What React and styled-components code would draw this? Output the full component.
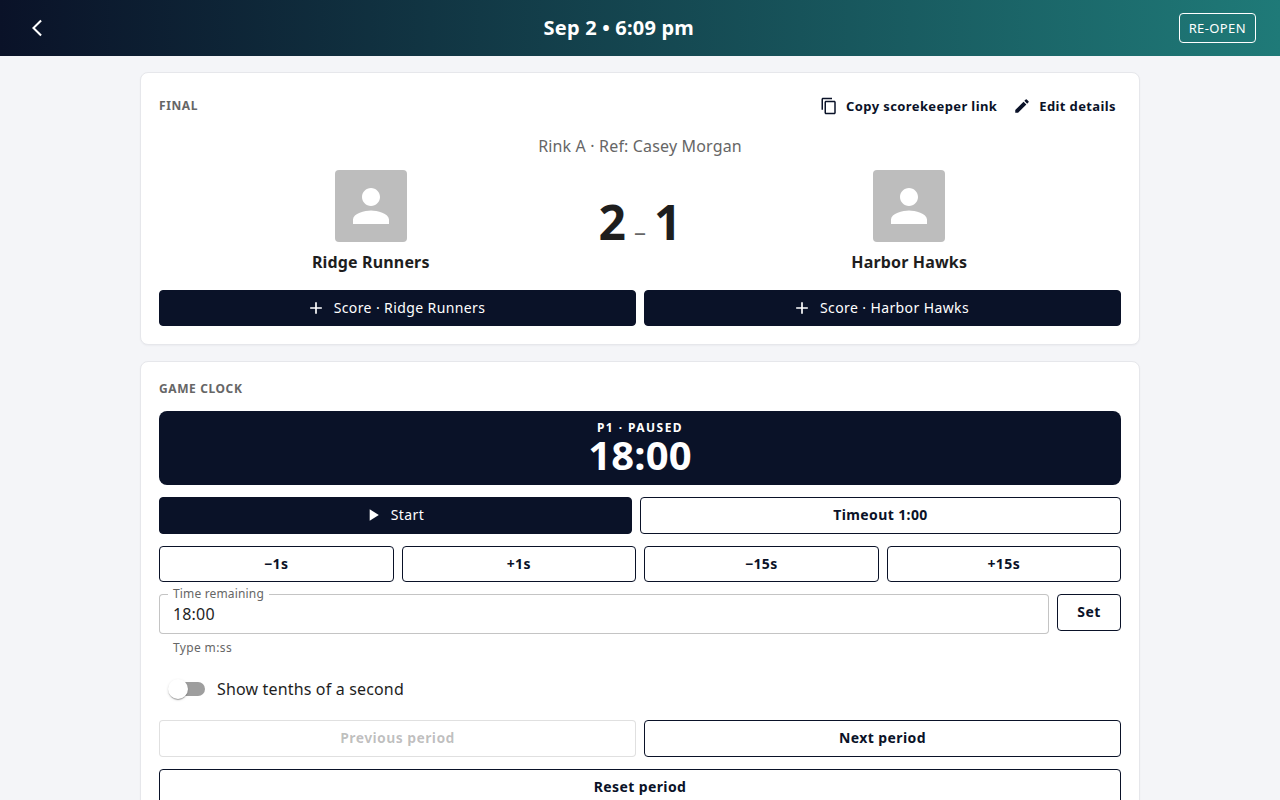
import React, { useState } from 'react';
import styled, { createGlobalStyle, css } from 'styled-components';

const color = {
  navy: '#0a1228',
  teal: '#1f7a78',
  page: '#f4f5f8',
  text: '#1e1e1e',
  muted: '#666666',
  cardBorder: '#e6e7eb',
  fieldBorder: 'rgba(0, 0, 0, 0.23)',
  disabledText: 'rgba(0, 0, 0, 0.26)',
  disabledBorder: 'rgba(0, 0, 0, 0.12)',
};

const GlobalStyle = createGlobalStyle`
  *, *::before, *::after { box-sizing: border-box; }
  body {
    margin: 0;
    background: ${color.page};
    color: ${color.text};
    font-family: 'Noto Sans', sans-serif;
    font-size: 16px;
    line-height: 24px;
    letter-spacing: 0.01em;
  }
  button, input { font: inherit; letter-spacing: inherit; }
`;

const AppBar = styled.header`
  display: flex;
  align-items: center;
  height: 56px;
  padding: 0 24px 0 15px;
  color: #fff;
  background: linear-gradient(90deg, ${color.navy}, ${color.teal});
`;

const BackButton = styled.button`
  display: flex;
  align-items: center;
  justify-content: center;
  width: 44px;
  height: 44px;
  padding: 0;
  border: 0;
  border-radius: 50%;
  background: none;
  color: inherit;
  cursor: pointer;
`;

const Title = styled.h1`
  flex: 1;
  margin: 0;
  font-size: 20px;
  line-height: 32px;
  font-weight: 700;
  letter-spacing: 0.01em;
  text-align: center;
`;

const ReopenButton = styled.button`
  height: 30px;
  padding: 0 9px;
  border: 1px solid #fff;
  border-radius: 4px;
  background: none;
  color: inherit;
  font-size: 13px;
  line-height: 22px;
  letter-spacing: 0.03em;
  cursor: pointer;
`;

const Main = styled.main`
  display: flex;
  flex-direction: column;
  gap: 16px;
  max-width: 1032px;
  margin: 0 auto;
  padding: 16px;
`;

const Card = styled.section`
  display: flex;
  flex-direction: column;
  gap: 12px;
  padding: 18px;
  border: 1px solid ${color.cardBorder};
  border-radius: 8px;
  background: #fff;
  box-shadow: 0 1px 2px rgba(15, 23, 42, 0.04);
`;

const CardHeader = styled.div`
  display: flex;
  align-items: center;
  justify-content: space-between;
`;

const Overline = styled.h2`
  margin: 0;
  padding-bottom: 1px;
  color: ${color.muted};
  font-size: 12px;
  line-height: 18px;
  font-weight: 700;
  letter-spacing: 0.05em;
  text-transform: uppercase;
`;

const Actions = styled.div`
  display: flex;
  gap: 8px;
`;

const TextButton = styled.button`
  display: flex;
  align-items: center;
  gap: 8px;
  padding: 4px 5px 5px 3px;
  border: 0;
  border-radius: 4px;
  background: none;
  color: ${color.navy};
  font-size: 13px;
  line-height: 22px;
  font-weight: 700;
  letter-spacing: 0.03em;
  cursor: pointer;
`;

const Venue = styled.p`
  margin: 0;
  color: ${color.muted};
  text-align: center;
`;

const Scoreboard = styled.div`
  display: grid;
  grid-template-columns: 1fr auto 1fr;
  align-items: center;
  gap: 16px;
`;

const Team = styled.div`
  display: flex;
  flex-direction: column;
  align-items: center;
  gap: 8px;
  font-weight: 700;
`;

const Avatar = styled.div`
  display: flex;
  align-items: center;
  justify-content: center;
  width: 72px;
  height: 72px;
  border-radius: 4px;
  background: #bdbdbd;
  color: #fff;
`;

const Score = styled.div`
  display: flex;
  align-items: baseline;
  gap: 8px;
  font-size: 48px;
  line-height: 48px;
  font-weight: 700;
  letter-spacing: 0;
`;

const Dash = styled.span`
  color: ${color.muted};
  font-size: 24px;
  line-height: 24px;
  font-weight: 400;
`;

const ButtonRow = styled.div`
  display: grid;
  grid-template-columns: repeat(${(p) => p.$columns}, 1fr);
  gap: 8px;
`;

const ScoreActions = styled(ButtonRow)`
  padding-top: 4px;
`;

const ClockActions = styled.div`
  display: flex;
  flex-wrap: wrap;
  gap: 8px;
`;

const filled = css`
  border-color: ${color.navy};
  background: ${color.navy};
  color: #fff;
  font-weight: 400;
`;

const Button = styled.button`
  display: flex;
  align-items: center;
  justify-content: center;
  gap: 8px;
  min-width: 64px;
  flex: ${(p) => (p.$basis ? `1 1 ${p.$basis}px` : '0 0 auto')};
  padding: 5px 15px ${(p) => (p.$compact ? 5 : 6)}px;
  border: 1px solid ${color.navy};
  border-radius: 4px;
  background: #fff;
  color: ${color.navy};
  font-size: 14px;
  line-height: 24px;
  font-weight: 700;
  letter-spacing: 0.028em;
  cursor: pointer;
  ${(p) => p.$filled && filled}

  svg { margin-left: -4px; }

  &:disabled {
    border-color: ${color.disabledBorder};
    color: ${color.disabledText};
    cursor: default;
  }
`;

const Clock = styled.div`
  padding: 8px 16px 12px;
  border-radius: 8px;
  background: ${color.navy};
  color: #fff;
  text-align: center;
  font-weight: 700;
`;

const ClockStatus = styled.div`
  font-size: 12px;
  line-height: 18px;
  letter-spacing: 0.12em;
`;

const ClockTime = styled.div`
  font-size: 40px;
  line-height: 36px;
`;

const TimeRow = styled.div`
  display: flex;
  align-items: flex-start;
  gap: 8px;
`;

const Field = styled.div`
  position: relative;
  display: flex;
  flex: 1;
  flex-direction: column;
  gap: 4px;
`;

const FieldLabel = styled.label`
  position: absolute;
  top: -9px;
  left: 9px;
  padding: 0 5px;
  background: #fff;
  color: ${color.muted};
  font-size: 12px;
  line-height: 18px;
`;

const TextInput = styled.input`
  width: 100%;
  height: 40px;
  padding: 0 13px;
  border: 1px solid ${color.fieldBorder};
  border-radius: 4px;
  background: #fff;
  color: ${color.text};
  outline: 0;

  &:focus { border-color: ${color.navy}; }
`;

const HelperText = styled.p`
  margin: 0 14px;
  color: ${color.muted};
  font-size: 12px;
  line-height: 20px;
  letter-spacing: 0.03em;
`;

const SwitchLabel = styled.label`
  display: flex;
  align-items: center;
  align-self: flex-start;
  gap: 12px;
  height: 38px;
  padding-left: 12px;
  cursor: pointer;
`;

const Switch = styled.input`
  appearance: none;
  display: flex;
  align-items: center;
  width: 34px;
  height: 14px;
  margin: 0;
  border-radius: 7px;
  background: #9e9e9e;
  cursor: pointer;

  &::before {
    content: '';
    flex: none;
    width: 20px;
    height: 20px;
    margin-left: -3px;
    border-radius: 50%;
    background: #fff;
    box-shadow: 0 2px 1px -1px rgba(0, 0, 0, 0.2), 0 1px 1px rgba(0, 0, 0, 0.14), 0 1px 3px rgba(0, 0, 0, 0.12);
  }

  &:checked { background: ${color.teal}; }
  &:checked::before { margin-left: 17px; }
`;

const icons = {
  back: 'M17.77 3.77 16 2 6 12l10 10 1.77-1.77L9.54 12z',
  copy: 'M16 1H4c-1.1 0-2 .9-2 2v14h2V3h12zm3 4H8c-1.1 0-2 .9-2 2v14c0 1.1.9 2 2 2h11c1.1 0 2-.9 2-2V7c0-1.1-.9-2-2-2m0 16H8V7h11z',
  edit: 'M3 17.25V21h3.75L17.81 9.94l-3.75-3.75zM20.71 7.04c.39-.39.39-1.02 0-1.41l-2.34-2.34a.9959.9959 0 0 0-1.41 0l-1.83 1.83 3.75 3.75z',
  person: 'M12 12c2.21 0 4-1.79 4-4s-1.79-4-4-4-4 1.79-4 4 1.79 4 4 4m0 2c-2.67 0-8 1.34-8 4v2h16v-2c0-2.66-5.33-4-8-4',
  plus: 'M19 13h-6v6h-2v-6H5v-2h6V5h2v6h6z',
  play: 'M8 5v14l11-7z',
};

function Icon({ name, size = 20 }) {
  return (
    <svg width={size} height={size} viewBox="0 0 24 24" fill="currentColor" aria-hidden="true">
      <path d={icons[name]} />
    </svg>
  );
}

function TeamBlock({ name }) {
  return (
    <Team>
      <Avatar>
        <Icon name="person" size={54} />
      </Avatar>
      <span>{name}</span>
    </Team>
  );
}

const teams = ['Ridge Runners', 'Harbor Hawks'];
const adjustments = ['−1s', '+1s', '−15s', '+15s'];

export default function App() {
  const [time, setTime] = useState('18:00');
  const [tenths, setTenths] = useState(false);

  return (
    <>
      <GlobalStyle />
      <AppBar>
        <BackButton type="button" aria-label="Back">
          <Icon name="back" />
        </BackButton>
        <Title>Sep 2 • 6:09 pm</Title>
        <ReopenButton type="button">RE-OPEN</ReopenButton>
      </AppBar>
      <Main>
        <Card>
          <CardHeader>
            <Overline>Final</Overline>
            <Actions>
              <TextButton type="button">
                <Icon name="copy" size={18} />
                Copy scorekeeper link
              </TextButton>
              <TextButton type="button">
                <Icon name="edit" size={18} />
                Edit details
              </TextButton>
            </Actions>
          </CardHeader>
          <Venue>Rink A · Ref: Casey Morgan</Venue>
          <Scoreboard>
            <TeamBlock name={teams[0]} />
            <Score>
              <span>2</span>
              <Dash>–</Dash>
              <span>1</span>
            </Score>
            <TeamBlock name={teams[1]} />
          </Scoreboard>
          <ScoreActions $columns={2}>
            {teams.map((team) => (
              <Button key={team} type="button" $filled $compact>
                <Icon name="plus" />
                Score · {team}
              </Button>
            ))}
          </ScoreActions>
        </Card>

        <Card>
          <Overline>Game clock</Overline>
          <Clock>
            <ClockStatus>P1 · PAUSED</ClockStatus>
            <ClockTime>18:00</ClockTime>
          </Clock>
          <ClockActions>
            <Button type="button" $filled $basis={120}>
              <Icon name="play" />
              Start
            </Button>
            <Button type="button" $basis={128}>Timeout 1:00</Button>
          </ClockActions>
          <ButtonRow $columns={4}>
            {adjustments.map((label) => (
              <Button key={label} type="button" $compact>{label}</Button>
            ))}
          </ButtonRow>
          <TimeRow>
            <Field>
              <TextInput
                id="time-remaining"
                value={time}
                aria-describedby="time-help"
                onChange={(e) => setTime(e.target.value)}
              />
              <FieldLabel htmlFor="time-remaining">Time remaining</FieldLabel>
              <HelperText id="time-help">Type m:ss</HelperText>
            </Field>
            <Button type="button">Set</Button>
          </TimeRow>
          <SwitchLabel>
            <Switch
              type="checkbox"
              role="switch"
              checked={tenths}
              onChange={(e) => setTenths(e.target.checked)}
            />
            Show tenths of a second
          </SwitchLabel>
          <ButtonRow $columns={2}>
            <Button type="button" disabled>Previous period</Button>
            <Button type="button">Next period</Button>
          </ButtonRow>
          <Button type="button">Reset period</Button>
        </Card>
      </Main>
    </>
  );
}
